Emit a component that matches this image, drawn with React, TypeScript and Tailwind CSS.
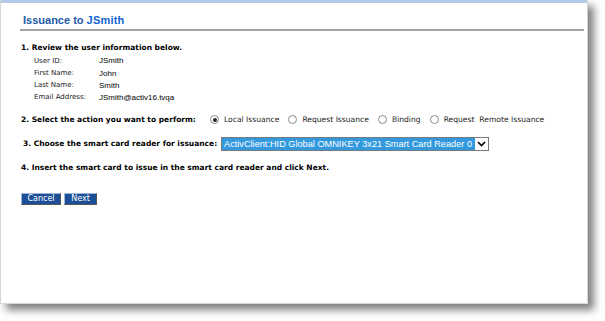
import React from "react";

const USER_INFO = [
  { label: "User ID:", value: "JSmith" },
  { label: "First Name:", value: "John" },
  { label: "Last Name:", value: "Smith" },
  { label: "Email Address:", value: "JSmith@activ16.tvqa" },
];

const ACTIONS = [
  { label: "Local Issuance", checked: true },
  { label: "Request Issuance", checked: false },
  { label: "Binding", checked: false },
  { label: "Request  Remote Issuance", checked: false },
];

const verdana = "font-['DejaVu_Sans',Verdana,sans-serif]";
const arial = "font-['Liberation_Sans',Arial,sans-serif]";

function Radio({ checked }: { checked: boolean }) {
  return (
    <span className="w-[9px] h-[9px] rounded-full border border-[#8a8a8a] bg-white flex items-center justify-center shrink-0">
      {checked && <span className="w-[4px] h-[4px] rounded-full bg-[#222]" />}
    </span>
  );
}

function Button({ children, width }: { children: React.ReactNode; width: string }) {
  return (
    <button
      className={`${width} h-[12px] bg-[#1d4f98] text-white text-[8px] leading-none ${verdana} border border-t-[#9fb6d8] border-l-[#9fb6d8] border-b-[#555] border-r-[#555] flex items-center justify-center`}
    >
      {children}
    </button>
  );
}

export default function App() {
  return (
    <div className="w-[605px] h-[321px] bg-white overflow-hidden">
      <div className="w-[588px] h-[304px] bg-white border-l border-r border-b border-[#d6d6d6] shadow-[6px_6px_8px_rgba(0,0,0,0.5)] flex flex-col">
        <div className="h-[3px] bg-[#b3cbe9]" />

        <div className={`pl-[22px] mt-[10px] leading-[14px] text-[11px] font-bold text-[#1c5aa6] ${arial}`}>
          Issuance to <span className="text-[#1165cf] tracking-[0.2px]">JSmith</span>
        </div>
        <div className="ml-[19px] mt-[2px] w-[564px] h-[2px] bg-[#a3a3a3]" />

        <div className="pl-[20px] text-black">
          <div className={`mt-[11px] leading-[12px] text-[7.5px] font-bold ${verdana}`}>
            1. Review the user information below.
          </div>
          <div className="mt-[1px] pl-[13px] flex flex-col">
            {USER_INFO.map((row, i) => (
              <div key={row.label} className={`flex items-center h-[12px] ${i > 0 ? "pt-[1px]" : ""}`}>
                <span className={`w-[65px] text-[7px] text-[#222] ${verdana}`}>{row.label}</span>
                <span className={`text-[8px] ${arial}`}>{row.value}</span>
              </div>
            ))}
          </div>

          <div className="mt-[10px] h-[14px] flex items-center">
            <span className={`w-[189px] text-[7.5px] font-bold ${verdana}`}>
              2. Select the action you want to perform:
            </span>
            <div className="flex items-center">
              {ACTIONS.map((a) => (
                <label key={a.label} className={`flex items-center gap-[5px] mr-[9px] text-[7.6px] text-[#222] ${verdana} whitespace-pre`}>
                  <Radio checked={a.checked} />
                  {a.label}
                </label>
              ))}
            </div>
          </div>

          <div className="mt-[10px] h-[14px] flex items-center pl-[2px]">
            <span className={`w-[198px] text-[7.5px] font-bold ${verdana}`}>
              3. Choose the smart card reader for issuance:
            </span>
            <div className="w-[268px] h-[14px] border border-[#7a7a7a] bg-white flex items-stretch">
              <div className={`flex-1 bg-[#3399de] text-white text-[9.2px] leading-[12px] pl-[2px] ${arial} whitespace-nowrap overflow-hidden`}>
                ActivClient:HID Global OMNIKEY 3x21 Smart Card Reader 0
              </div>
              <div className="w-[13px] flex items-center justify-center">
                <svg width="9" height="6" viewBox="0 0 9 6">
                  <path d="M1 1 L4.5 4.5 L8 1" fill="none" stroke="#000" strokeWidth="1.6" />
                </svg>
              </div>
            </div>
          </div>

          <div className={`mt-[11px] leading-[12px] text-[7.5px] font-bold ${verdana}`}>
            4. Insert the smart card to issue in the smart card reader and click Next.
          </div>

          <div className="mt-[19px] flex gap-[3px]">
            <Button width="w-[40px]">Cancel</Button>
            <Button width="w-[33px]">Next</Button>
          </div>
        </div>
      </div>
    </div>
  );
}
